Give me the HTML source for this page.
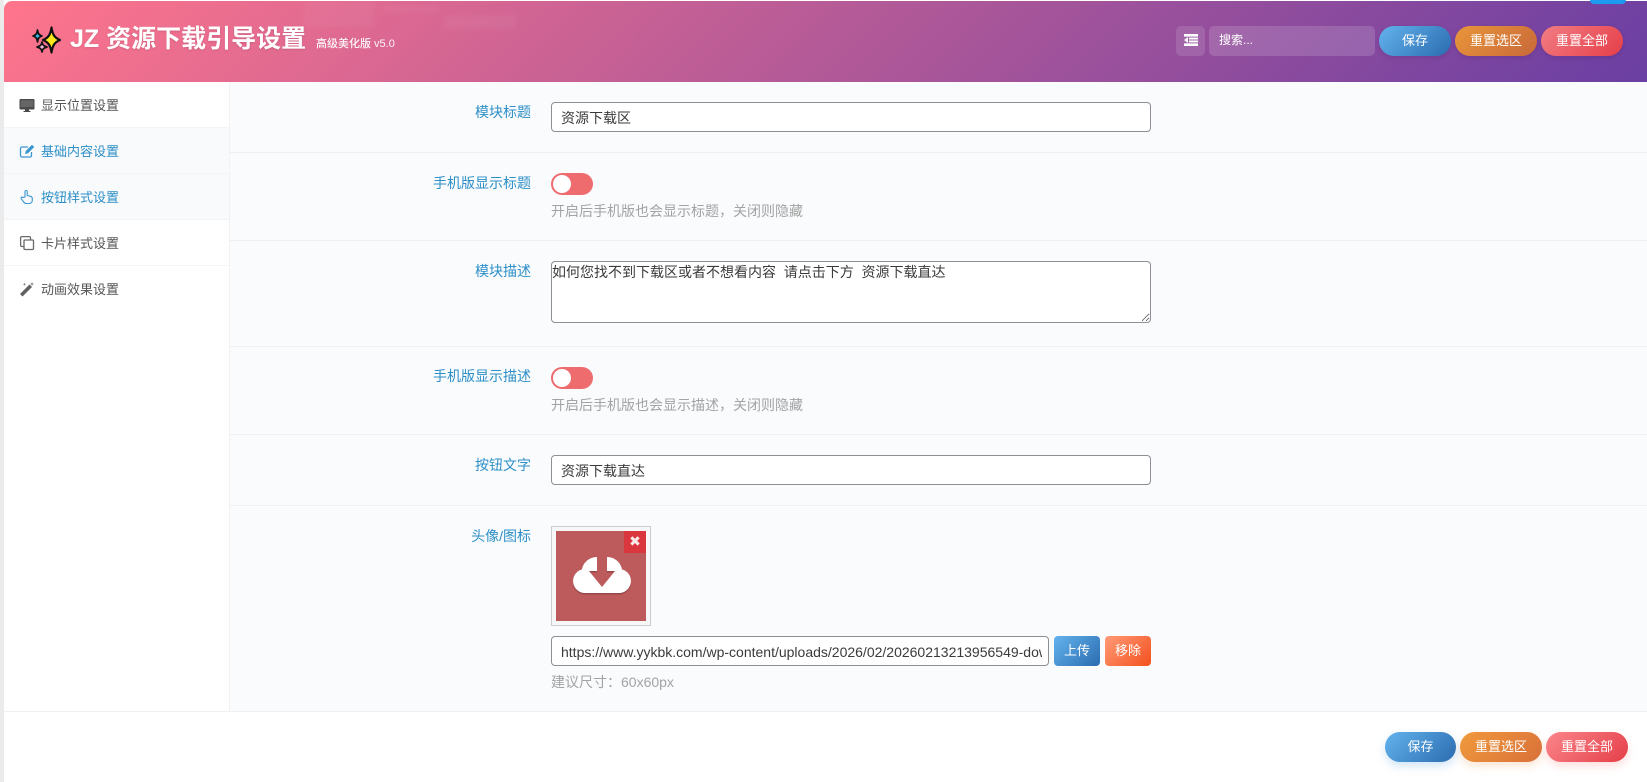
<!DOCTYPE html>
<html lang="zh-CN">
<head>
<meta charset="utf-8">
<title>JZ 资源下载引导设置</title>
<style>
*{box-sizing:border-box}
html,body{margin:0;padding:0;width:1647px;height:782px;overflow:hidden;background:#fff;font-family:"Liberation Sans","Noto Sans CJK SC",sans-serif;}
.abs,.lb,.help,.ln,.nav,.btn,.inp,.sw{position:absolute}
#strip{position:absolute;left:0;top:0;width:4px;height:782px;background:#ebebeb}
#hd{position:absolute;left:4px;top:1px;width:1643px;height:81px;border-radius:8px 0 0 0;background:linear-gradient(135deg,#ff758c 0%,#6a3fa3 100%);overflow:hidden}
.wm{position:absolute;background:rgba(255,255,255,.045);filter:blur(2px)}
#tt{position:absolute;left:70px;top:21px;line-height:36px;font-size:25px;font-weight:700;color:#fff;white-space:nowrap;text-shadow:0 1px 2px rgba(0,0,0,.12)}
#st{position:absolute;left:316px;top:36px;line-height:16px;font-size:11px;font-weight:500;color:#fff;opacity:.92;white-space:nowrap}
#blue{position:absolute;left:1590px;top:0;width:36px;height:4px;background:#1d9bf0;border-radius:0 0 7px 7px}
#side{position:absolute;left:4px;top:82px;width:226px;height:629px;background:#fff;border-right:1px solid #f0f2f4}
#main{position:absolute;left:230px;top:82px;width:1417px;height:629px;background:#f9fbfd}
#foot{position:absolute;left:4px;top:711px;width:1643px;height:1px;background:#eff0f2}
.nav{left:4px;width:225px;height:46px;border-bottom:1px solid #f2f4f6;font-size:13px;line-height:47px;color:#555;padding-left:37px;white-space:nowrap}
.nav.on{background:#f8fafc;color:#2d8fc6}
.nav svg{position:absolute;left:15px;top:15px;width:16px;height:16px}
.ln{left:230px;width:1417px;height:1px;background:#eef1f4}
.lb{left:330px;width:201px;text-align:right;font-size:14px;line-height:20px;color:#2d8fc6;white-space:nowrap}
.help{left:551px;font-size:14px;line-height:20px;color:#a3a3a3;white-space:nowrap}
.inp{left:551px;width:600px;height:30px;border:1px solid #8c8f94;border-radius:4px;background:#fff;padding:1px 9px 0;font:14px "Liberation Sans","Noto Sans CJK SC",sans-serif;color:#3a3a3a;outline:0}
textarea.inp{height:62px;padding:0;font-size:14px;line-height:20px;margin:0}
.sw{left:551px;width:42px;height:22px;border-radius:11px;background:#ee6b6e}
.sw:after{content:"";position:absolute;left:2px;top:2px;width:18px;height:18px;border-radius:50%;background:#fff}
.btn{height:30px;border-radius:15px;color:#fff;font-size:13px;line-height:29px;text-align:center;white-space:nowrap}
.b{background:linear-gradient(135deg,#63b3ed,#2b6cb0)}
.o{background:linear-gradient(135deg,#f09a3c,#d9703a)}
.r{background:linear-gradient(135deg,#fa868a,#e53e48)}
.hb.o{background:linear-gradient(135deg,#e9963a,#c8683a)}
.hb.r{background:linear-gradient(135deg,#f27d84,#e53e48)}
.hb{box-shadow:0 2px 5px rgba(60,20,90,.18)}
.fb.b{box-shadow:0 4px 9px rgba(66,153,225,.25)}
.fb.o{box-shadow:0 4px 9px rgba(237,137,54,.22)}
.fb.r{box-shadow:0 4px 9px rgba(245,101,101,.22)}
.sq{border-radius:4px;height:30px;width:46px}
</style>
</head>
<body>
<div id="strip"></div>

<div id="hd">
  <div class="wm" style="left:300px;top:0;width:70px;height:26px;transform:skewX(-8deg)"></div>
  <div class="wm" style="left:380px;top:4px;width:55px;height:8px"></div>
  <div class="wm" style="left:440px;top:14px;width:72px;height:14px;transform:skewX(-12deg)"></div>
</div>
<div id="blue"></div>

<svg class="abs" style="left:30px;top:24px" width="32" height="32" viewBox="0 0 32 32">
  <path d="M21.500 3.500 C22.500 10 24 13.500 30 16 C24 18.500 22.500 22 21.500 28.500 C20.500 22 19 18.500 13 16 C19 13.500 20.500 10 21.500 3.500Z" fill="#ffe81a" stroke="#111" stroke-width="2.200" stroke-linejoin="round"/>
  <path d="M7.500 6 C8 9.800 9 11 12 12 C9 13 8 14.200 7.500 18 C7 14.200 6 13 3 12 C6 11 7 9.800 7.500 6Z" fill="#35b6e8" stroke="#111" stroke-width="1.700" stroke-linejoin="round"/>
  <path d="M12 18 C12.500 21 13.500 22 17 23 C13.500 24 12.500 25 12 28 C11.500 25 10.500 24 7 23 C10.500 22 11.500 21 12 18Z" fill="#f3b6dc" stroke="#111" stroke-width="1.700" stroke-linejoin="round"/>
</svg>
<div id="tt">JZ 资源下载引导设置</div>
<div id="st">高级美化版 v5.0</div>

<div id="hd2">
  <div class="abs" style="left:1176px;top:26px;width:29px;height:30px;border-radius:5px;background:rgba(255,255,255,.13)"></div>
  <svg class="abs" style="left:1184px;top:34px" width="14" height="12" viewBox="0 0 14 12">
    <path d="M0 0h14v2.600H0zM5 3.600h9v1.900H5zM5 6.500h9v1.900H5zM0 9.400h14V12H0zM4 3v6L0 6z" fill="#fff"/>
  </svg>
  <div class="abs" style="left:1209px;top:26px;width:166px;height:30px;border-radius:5px;background:rgba(255,255,255,.15);color:#fff;font-size:12px;line-height:29px;padding-left:10px">搜索...</div>
  <div class="btn b hb" style="left:1379px;top:26px;width:72px">保存</div>
  <div class="btn o hb" style="left:1455px;top:26px;width:82px">重置选区</div>
  <div class="btn r hb" style="left:1541px;top:26px;width:82px">重置全部</div>
</div>

<div id="side"></div>
<div id="main"></div>

<div class="nav" style="top:82px">
  <svg viewBox="0 0 16 16"><path d="M1.500 2h13a1 1 0 0 1 1 1v8.500a1 1 0 0 1-1 1H10v1.500h1.500v1h-7v-1H6v-1.500H1.500a1 1 0 0 1-1-1V3a1 1 0 0 1 1-1z" fill="#4a4a4a"/><rect x="1.700" y="3.200" width="12.600" height="6.800" fill="#666"/></svg>显示位置设置</div>
<div class="nav on" style="top:128px">
  <svg viewBox="0 0 16 16" fill="none" stroke="#3d97cf" stroke-width="1.300"><path d="M12.500 9v3.500a1.500 1.500 0 0 1-1.500 1.500H3a1.500 1.500 0 0 1-1.500-1.500V5.500A1.500 1.500 0 0 1 3 4h6"/><path d="M6 11l.7-3L13 1.700 15.300 4 9 10.300z" fill="#3d97cf" stroke="none"/></svg>基础内容设置</div>
<div class="nav on" style="top:174px">
  <svg viewBox="0 0 16 16" fill="none" stroke="#3d97cf" stroke-width="1.100" stroke-linejoin="round"><path d="M6 8V2.600a1.100 1.100 0 0 1 2.200 0V6.500l3.300.8c1.100.3 1.800 1 1.800 2.200v1.800c0 2-1.400 3.200-3.200 3.200H7.500c-1.200 0-2-.5-2.700-1.400L2.300 9.800c-.8-1.200.8-2.300 1.700-1.300z"/></svg>按钮样式设置</div>
<div class="nav" style="top:220px">
  <svg viewBox="0 0 16 16" fill="none" stroke="#6a6a6a" stroke-width="1.300"><rect x="5" y="5" width="9.500" height="9.500" rx="1"/><path d="M5 11.500H2.800a1.200 1.200 0 0 1-1.200-1.200V2.800a1.200 1.200 0 0 1 1.200-1.200h7.500a1.200 1.200 0 0 1 1.200 1.200V5"/></svg>卡片样式设置</div>
<div class="nav" style="top:266px;border-bottom:0">
  <svg viewBox="0 0 16 16"><path d="M1 13l9.500-9.500L13 6l-9.500 9.500z" fill="#606060"/><path d="M13 1l.6 1.400 1.400.6-1.400.6-.6 1.400-.6-1.400-1.400-.6 1.400-.6zM5.500 1.500l.5 1.200 1.200.5-1.200.5-.5 1.200-.5-1.200-1.200-.5 1.200-.5z" fill="#888"/></svg>动画效果设置</div>

<div class="ln" style="top:152px"></div>
<div class="ln" style="top:240px"></div>
<div class="ln" style="top:346px"></div>
<div class="ln" style="top:434px"></div>
<div class="ln" style="top:505px"></div>

<div class="lb" style="top:102px">模块标题</div>
<input class="inp" style="top:102px" value="资源下载区">

<div class="lb" style="top:173px">手机版显示标题</div>
<div class="sw" style="top:173px"></div>
<div class="help" style="top:201px">开启后手机版也会显示标题，关闭则隐藏</div>

<div class="lb" style="top:261px">模块描述</div>
<textarea class="inp" style="top:261px">如何您找不到下载区或者不想看内容  请点击下方  资源下载直达</textarea>

<div class="lb" style="top:366px">手机版显示描述</div>
<div class="sw" style="top:367px"></div>
<div class="help" style="top:395px">开启后手机版也会显示描述，关闭则隐藏</div>

<div class="lb" style="top:455px">按钮文字</div>
<input class="inp" style="top:455px" value="资源下载直达">

<div class="lb" style="top:526px">头像/图标</div>
<div class="abs" style="left:551px;top:526px;width:100px;height:100px;border:1px solid #ccc;background:#f7f7f7"></div>
<div class="abs" style="left:556px;top:531px;width:90px;height:90px;background:#bc5a5c"></div>
<svg class="abs" style="left:556px;top:531px" width="90" height="90" viewBox="0 0 90 90">
  <path d="M29 62a12 12 0 0 1-3-23.600C27 32 33 26 41 26V40H33L46 56 59 40H51V26C59 26 65 32 66 38.400A12 12 0 0 1 63 62Z" fill="#000" opacity=".2" transform="translate(0 1.500)"/>
  <path d="M29 62a12 12 0 0 1-3-23.600C27 32 33 26 41 26V40H33L46 56 59 40H51V26C59 26 65 32 66 38.400A12 12 0 0 1 63 62Z" fill="#fff"/>
</svg>
<div class="abs" style="left:624px;top:531px;width:22px;height:22px;background:#d9363e;color:#fbe9e9;font:14px/23px 'DejaVu Sans',sans-serif;text-align:center">✖</div>

<input class="inp" style="top:636px;width:498px;padding-right:6px" value="https://www.yykbk.com/wp-content/uploads/2026/02/20260213213956549-download.png">
<div class="btn b sq" style="left:1054px;top:636px">上传</div>
<div class="btn sq" style="left:1105px;top:636px;background:linear-gradient(135deg,#ff9a76,#f4511e)">移除</div>
<div class="help" style="top:672px">建议尺寸：60x60px</div>

<div id="foot"></div>
<div class="btn b fb" style="left:1385px;top:732px;width:71px">保存</div>
<div class="btn o fb" style="left:1460px;top:732px;width:82px">重置选区</div>
<div class="btn r fb" style="left:1546px;top:732px;width:82px">重置全部</div>
</body>
</html>
